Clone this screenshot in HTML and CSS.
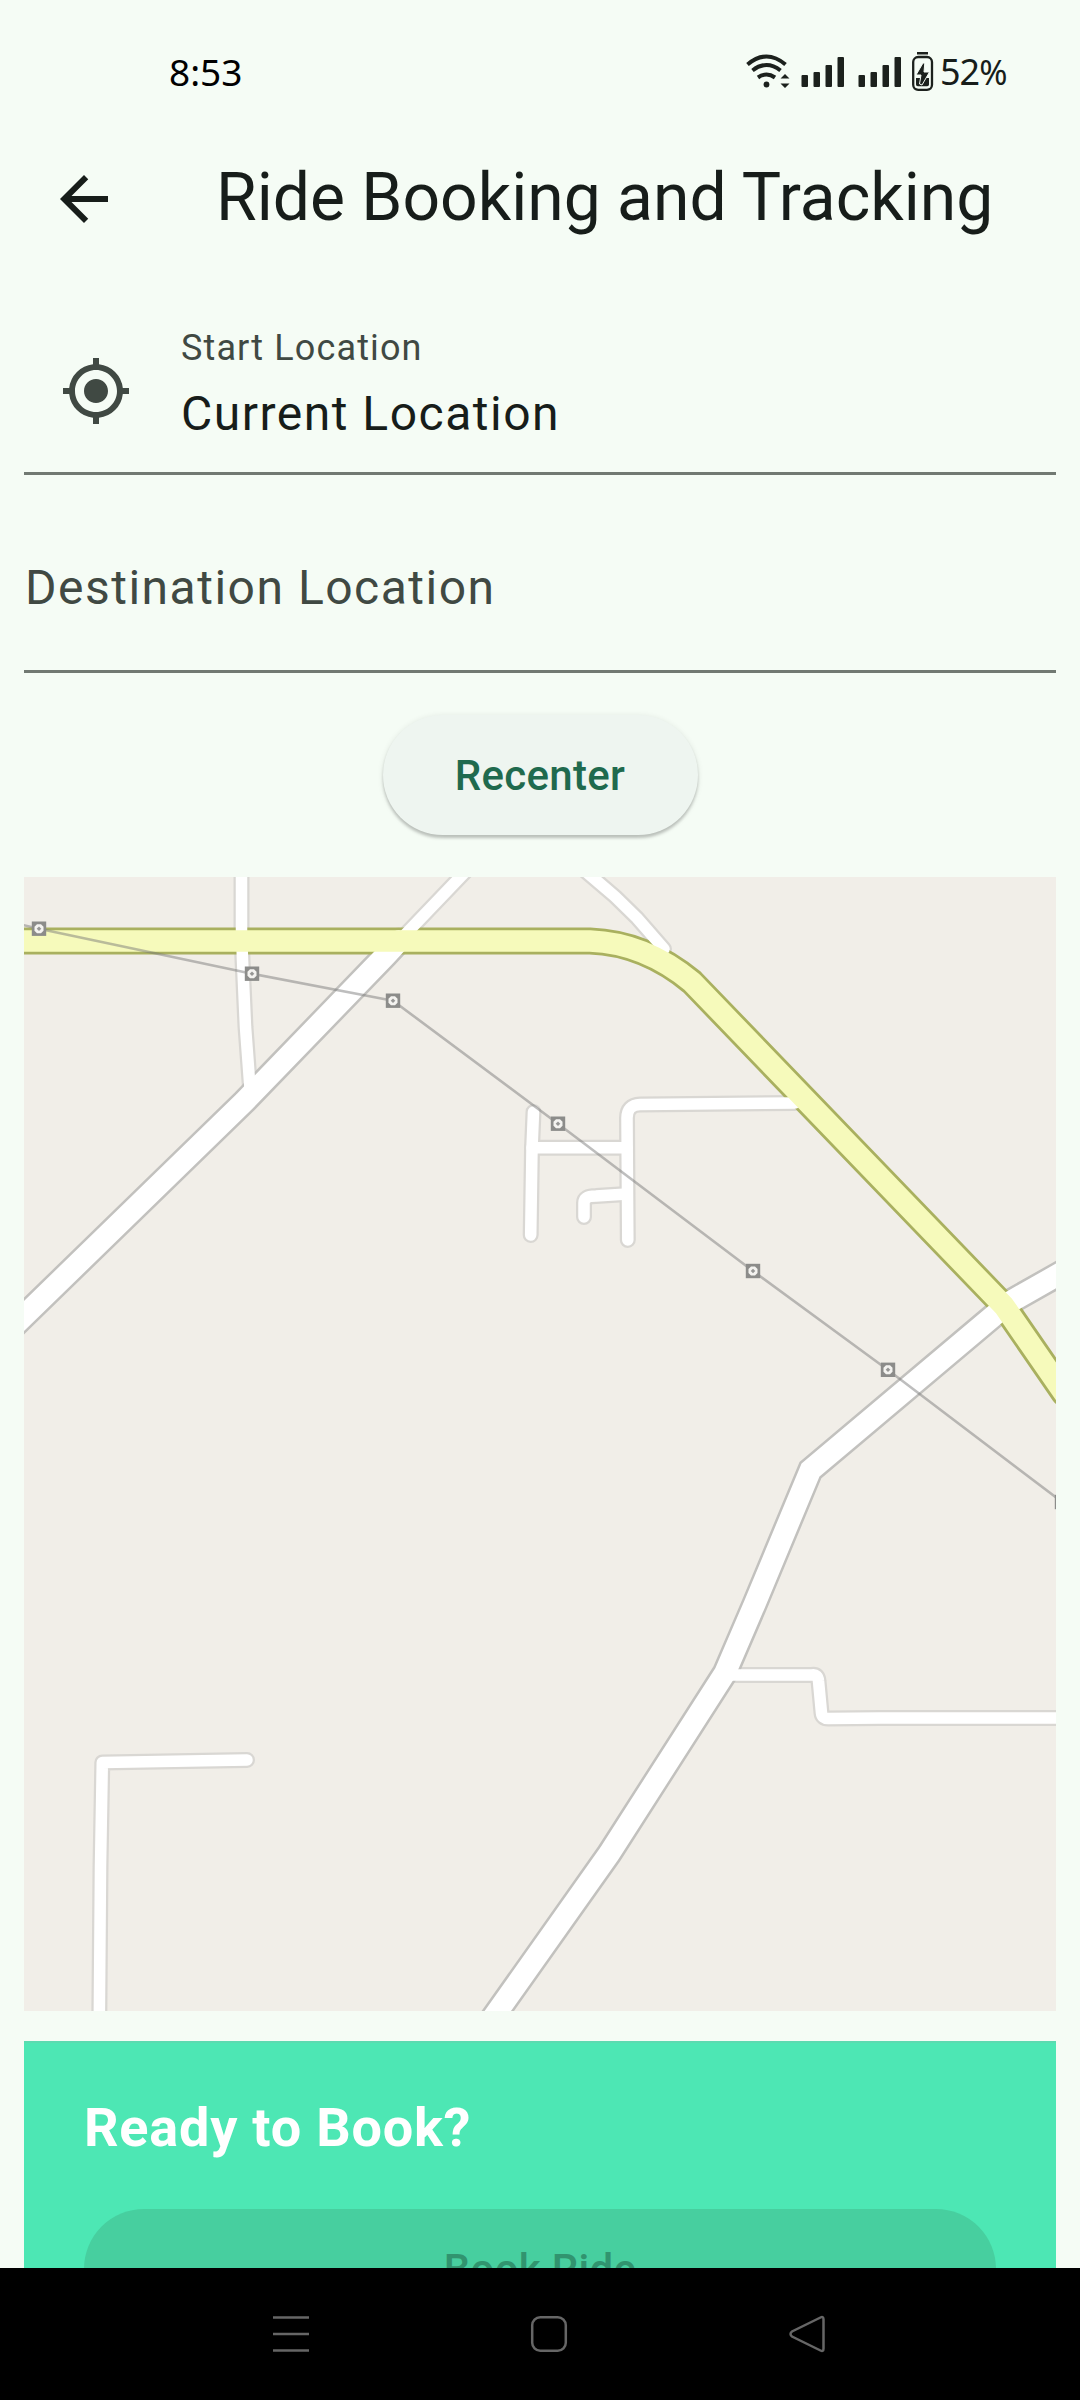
FILE: index.html
```html
<!DOCTYPE html>
<html lang="en">
<head>
<meta charset="utf-8">
<title>Ride Booking and Tracking</title>
<link rel="stylesheet" href="styles.css">
</head>
<body>
<div class="screen">
  <header class="status">
    <span class="time">8:53</span>
    <div class="status-right">
      <svg class="status-icons" viewBox="744 50 190 44" width="190" height="44">
        <g fill="none" stroke="#1c211d" stroke-width="4">
          <path d="M747.500 64.500Q766.500 48.500 785.500 64.500"/>
          <path d="M752.500 70.500Q766.500 59.500 780.500 70.500"/>
          <path d="M758 77.500Q766.500 71.500 775 77.500"/>
        </g>
        <g fill="#1c211d">
          <circle cx="766.500" cy="84.500" r="2.900"/>
          <path d="M780.500 78.500h9l-4.500-4.500zM780.500 83.500h9l-4.500 4.500z"/>
          <rect x="801.500" y="75" width="6.500" height="12" rx="1"/>
          <rect x="813.500" y="72" width="6.500" height="15" rx="1"/>
          <rect x="825.500" y="65" width="6.500" height="22" rx="1"/>
          <rect x="837.500" y="57" width="6.500" height="30" rx="1"/>
          <rect x="858.500" y="75" width="6.500" height="12" rx="1"/>
          <rect x="870.500" y="72" width="6.500" height="15" rx="1"/>
          <rect x="882.500" y="65" width="6.500" height="22" rx="1"/>
          <rect x="894.500" y="57" width="6.500" height="30" rx="1"/>
          <rect x="917" y="52" width="11" height="2.500"/>
          <path d="M916 78h13v6.500a1.800 1.800 0 0 1-1.800 1.800h-9.400a1.800 1.800 0 0 1-1.800-1.800z"/>
          <path d="M923 63l-7 12h5l-1.500 9 2.500 1 7.500-13h-5.500l.8-9z" stroke="#f5fcf5" stroke-width="1"/>
        </g>
        <rect x="913.200" y="57" width="18.800" height="32.800" rx="5" fill="none" stroke="#1c211d" stroke-width="2.300"/>
      </svg>
      <span class="battery">52<span class="percent">%</span></span>
    </div>
  </header>

  <div class="appbar">
    <svg class="icon back" viewBox="0 0 24 24"><path d="M20 11H7.830l5.590-5.590L12 4l-8 8 8 8 1.410-1.410L7.830 13H20z"/></svg>
    <h1 class="title">Ride Booking and Tracking</h1>
  </div>

  <main class="content">
    <div class="field start">
      <svg class="icon locate" viewBox="0 0 24 24"><path d="M12 8c-2.210 0-4 1.790-4 4s1.790 4 4 4 4-1.790 4-4-1.790-4-4-4zm8.940 3A8.994 8.994 0 0 0 13 3.060V1h-2v2.060A8.994 8.994 0 0 0 3.060 11H1v2h2.060A8.994 8.994 0 0 0 11 20.940V23h2v-2.060A8.994 8.994 0 0 0 20.940 13H23v-2h-2.060zM12 19c-3.870 0-7-3.130-7-7s3.130-7 7-7 7 3.130 7 7-3.130 7-7 7z"/></svg>
      <div class="field-text">
        <div class="label">Start Location</div>
        <div class="value">Current Location</div>
      </div>
    </div>
    <div class="field destination">
      <div class="placeholder">Destination Location</div>
    </div>
    <button class="recenter">Recenter</button>

    <svg class="map" viewBox="24 877 1032 1134" width="1032" height="1134">
      <defs>
        <g id="lanes">
          <path d="M241.500 870V930L242.500 960L245.500 1027L250 1088"/>
          <path d="M467 870L411.500 928L395 945"/>
          <path d="M584 870L615 896.500L637 918L664 949"/>
          <path d="M533.500 1112L532 1148L530.700 1235"/>
          <path d="M532 1147.700H627"/>
          <path d="M795 1103L640 1104.500Q627 1105 627 1118L627.800 1240"/>
          <path d="M627 1194L596 1196Q584 1196 584 1203V1217"/>
          <path d="M732 1675H812Q818 1674 818.500 1681L821.500 1713Q822 1718.500 828 1718.500L880 1718H1064"/>
          <path d="M247 1760L102.300 1762.500L100.500 1867L99.300 2020"/>
        </g>
        <g id="roads">
          <path d="M10 1329.500L24 1316L244 1102L386 955L399 941"/>
          <path d="M1070 1268L1010 1302L810.500 1470L754.500 1604.500L725 1673L609 1854L490 2022"/>
        </g>
        <path id="highway" d="M10 941H590Q645 943 692 982L1004 1306L1064 1393"/>
        <g id="pylon">
          <rect x="-7.200" y="-7.200" width="14.400" height="14.400" fill="#8c8c8a"/>
          <path d="M-2-4.500H2L4.500-2V2L2 4.500H-2L-4.500 2V-2z" fill="#f4f3f0"/>
          <path d="M0-2.300L2.300 0L0 2.300L-2.300 0z" fill="#969694"/>
        </g>
      </defs>
      <rect x="24" y="877" width="1032" height="1134" fill="#f1eee8"/>
      <g fill="none" stroke-linecap="round" stroke-linejoin="round">
        <use href="#lanes" stroke="#d9d7d3" stroke-width="16"/>
        <use href="#roads" stroke="#c2c1be" stroke-width="26.500" stroke-linejoin="miter"/>
        <use href="#highway" stroke="#a9b05f" stroke-width="27"/>
        <use href="#lanes" stroke="#fff" stroke-width="11.500"/>
        <use href="#roads" stroke="#fff" stroke-width="21.500" stroke-linejoin="miter"/>
        <use href="#highway" stroke="#f6fabb" stroke-width="21.500"/>
        <path d="M10 922L39 928.700L252 973.700L393 1000.700L558 1123.700L753 1271L888 1370L1062 1502" stroke="#777" stroke-opacity=".48" stroke-width="2.600"/>
      </g>
      <use href="#pylon" x="39" y="928.700"/>
      <use href="#pylon" x="252" y="973.700"/>
      <use href="#pylon" x="393" y="1000.700"/>
      <use href="#pylon" x="558" y="1123.700"/>
      <use href="#pylon" x="753" y="1271"/>
      <use href="#pylon" x="888" y="1369.800"/>
      <use href="#pylon" x="1062" y="1502"/>
    </svg>

    <section class="card">
      <h2 class="card-title">Ready to Book?</h2>
      <button class="book">Book Ride</button>
    </section>
  </main>

  <nav class="navbar">
    <svg viewBox="0 0 48 48"><path d="M6 7.500H42M6 24H42M6 40.500H42"/></svg>
    <svg viewBox="0 0 48 48"><rect x="7.200" y="7.200" width="33.600" height="33.600" rx="8"/></svg>
    <svg viewBox="0 0 48 48"><path d="M37.500 7.500Q40.500 6 40.500 9.500V38.500Q40.500 42 37.500 40.500L9 26.500Q6 24 9 21.500z"/></svg>
  </nav>
</div>
</body>
</html>
```
FILE: styles.css
```css
* { box-sizing: border-box; }

body {
  margin: 0;
  background: #f5fcf5;
  font-family: Roboto, "Liberation Sans", sans-serif;
  color: #171d1a;
}

h1, h2 { margin: 0; }

button {
  border: 0;
  font-family: inherit;
  white-space: nowrap;
}

.screen {
  width: 1080px;
  height: 2400px;
  display: flex;
  flex-direction: column;
  overflow: hidden;
}

.status {
  flex: none;
  height: 145px;
  padding: 50px 73px 0 169px;
  display: flex;
  justify-content: space-between;
  align-items: flex-start;
  line-height: 44px;
}

.time {
  font-family: "Noto Sans", sans-serif;
  font-size: 37px;
  color: #000;
}

.status-right { display: flex; gap: 6px; }
.status-icons { display: block; }

.battery {
  width: 67px;
  font-family: "Noto Sans", sans-serif;
  font-size: 36px;
  letter-spacing: -1px;
  white-space: nowrap;
}

.percent { font-size: 34px; }

.appbar {
  flex: none;
  height: 108px;
  padding-left: 48px;
  display: flex;
  align-items: center;
  gap: 96px;
}

.icon {
  flex: none;
  width: 72px;
  height: 72px;
}

.back { fill: #171d1a; }

.title {
  font-size: 66px;
  font-weight: 400;
  line-height: 84px;
  white-space: nowrap;
  padding-bottom: 2px;
}

.content {
  flex: 1;
  min-height: 0;
  padding: 54px 24px 0;
  display: flex;
  flex-direction: column;
  overflow: hidden;
}

.field {
  flex: none;
  display: flex;
  border-bottom: 3px solid #717972;
}

.start {
  height: 168px;
  padding: 2px 0 0 36px;
  gap: 49px;
  align-items: center;
}

.field-text { padding-bottom: 8px; }

.label, .placeholder { color: #404943; }

.label {
  font-size: 36px;
  line-height: 48px;
  letter-spacing: 1.13px;
}

.value {
  margin-top: 6px;
  font-size: 48px;
  line-height: 72px;
  letter-spacing: 1.5px;
}

.locate { fill: #404943; }

.destination {
  height: 168px;
  margin-top: 30px;
  padding-left: 1px;
  align-items: center;
}

.placeholder {
  font-size: 48px;
  line-height: 72px;
  letter-spacing: 1.5px;
}

.recenter {
  flex: none;
  align-self: center;
  width: 315px;
  height: 120px;
  margin: 42px 0;
  border-radius: 60px;
  background: #eef5f0;
  color: #1f6a4e;
  font-size: 42px;
  font-weight: 500;
  letter-spacing: .3px;
  box-shadow: 0 3px 3px rgba(0, 0, 0, .2), 0 1px 6px rgba(0, 0, 0, .09);
}

.map {
  flex: none;
  display: block;
}

.card {
  flex: none;
  height: 400px;
  margin-top: 30px;
  padding: 49px 60px 0;
  background: #4de7b4;
  border-top: 2px solid #5bdbb0;
}

.card-title {
  font-size: 54px;
  line-height: 72px;
  font-weight: 700;
  letter-spacing: .78px;
  color: #fff;
}

.book {
  display: block;
  width: 100%;
  height: 120px;
  margin-top: 45px;
  border-radius: 60px;
  background: #47cf9f;
  color: #31946f;
  font-size: 42px;
  font-weight: 500;
  letter-spacing: .3px;
}

.navbar {
  flex: none;
  height: 132px;
  padding: 0 249px 0 267px;
  background: #000;
  display: flex;
  justify-content: space-between;
  align-items: center;
}

.navbar svg {
  width: 48px;
  height: 48px;
  fill: none;
  stroke: #666;
  stroke-width: 2.500;
}
```
